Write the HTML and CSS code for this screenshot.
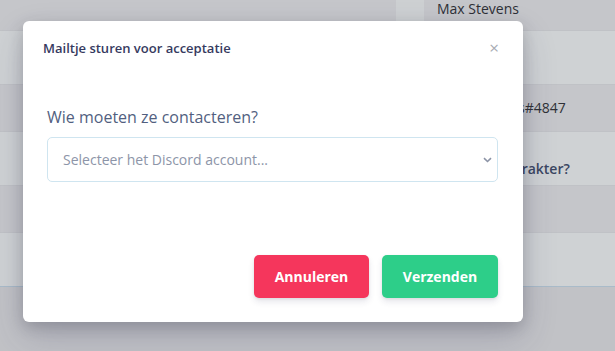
FILE: index.html
```html
<!DOCTYPE html>
<html>
<head>
	<title>Aanvragen</title>
	<link rel="stylesheet" href="styles.css">
</head>
<body>
	<div class="page">
		<div class="row row-dark">
			<div class="cell-gap"></div>
			<div class="cell-strip"></div>
			<div class="cell">Max Stevens</div>
		</div>
		<div class="row row-light"></div>
		<div class="row row-dark"><div class="cell cell-tag">maxstevens#4847</div></div>
		<div class="row row-light"><div class="cell cell-question">Wat is je karakter?</div></div>
		<div class="row row-dark"></div>
		<div class="row row-light row-last"></div>
	</div>

	<div class="modal">
		<div class="modal-header">
			<h6 class="modal-title">Mailtje sturen voor acceptatie</h6>
			<span class="close">&times;</span>
		</div>
		<div class="modal-body">
			<label class="label">Wie moeten ze contacteren?</label>
			<div class="select">
				<span class="placeholder">Selecteer het Discord account...</span>
				<svg class="chevron" width="9" height="6" viewBox="0 0 9 6"><path d="M1 1.2 L4.5 4.5 L8 1.2" fill="none" stroke="#8b93a6" stroke-width="1.6"/></svg>
			</div>
		</div>
		<div class="modal-footer">
			<button class="btn btn-danger">Annuleren</button>
			<button class="btn btn-success">Verzenden</button>
		</div>
	</div>
</body>
</html>
```

FILE: styles.css
```css
body {
	margin: 0;
	padding: 0;
	background-color: #c1c2c6;
	font-family: "Open Sans", "Noto Sans", sans-serif;
	overflow: hidden;
}

.page {
	width: 615px;
	height: 351px;
}

.row {
	display: flex;
	box-sizing: border-box;
	border-bottom: 1px solid #c0c2c6;
}
.row-dark {
	background-color: #c5c6ca;
	height: 47px;
}
.row-light {
	background-color: #cfd2d4;
	height: 54px;
}
.row:first-child {
	height: 31px;
}
.row-last {
	border-bottom: 1px solid #a9bbc9;
}

.cell-gap {
	width: 396px;
}
.cell-strip {
	width: 28px;
	background-color: #cdd0d2;
}
.cell {
	padding-left: 13px;
	font-size: 14px;
	color: #2e3036;
	line-height: 17px;
}
.cell-tag {
	padding-left: 447px;
	padding-top: 14px;
	color: #2f3136;
}
.cell-question {
	padding-left: 445px;
	padding-top: 28px;
	font-weight: 600;
	color: #3b4662;
}

.modal {
	position: absolute;
	left: 23px;
	top: 21px;
	width: 500px;
	height: 301px;
	background-color: #ffffff;
	border-radius: 6px;
	box-shadow: 0 15px 35px rgba(50, 50, 93, 0.2), 0 5px 15px rgba(0, 0, 0, 0.17);
	display: flex;
	flex-direction: column;
}

.modal-header {
	display: flex;
	justify-content: space-between;
	align-items: center;
	padding: 20px 24px 0 20px;
}
.modal-title {
	margin: 0;
	font-size: 13px;
	line-height: 14px;
	font-weight: 600;
	color: #363a60;
}
.close {
	font-size: 17px;
	line-height: 14px;
	color: #a8abb3;
}

.modal-body {
	padding: 50px 25px 0 24px;
}
.label {
	display: block;
	font-size: 16px;
	line-height: 25px;
	color: #525f7f;
	margin-bottom: 7px;
}
.select {
	box-sizing: border-box;
	height: 45px;
	border: 1px solid #cfe5f0;
	border-radius: 5px;
	display: flex;
	align-items: center;
	justify-content: space-between;
	padding: 0 5px 0 15px;
}
.placeholder {
	font-size: 14px;
	color: #8d95a8;
}

.modal-footer {
	display: flex;
	justify-content: flex-end;
	gap: 13px;
	padding: 73px 25px 0 0;
}
.btn {
	height: 43px;
	border: 0 none transparent;
	border-radius: 5px;
	font-family: "Open Sans", "Noto Sans", sans-serif;
	font-size: 14px;
	font-weight: 700;
	color: #ffffff;
	box-shadow: 0 4px 6px rgba(50, 50, 93, 0.11), 0 1px 3px rgba(0, 0, 0, 0.08);
}
.btn-danger {
	width: 115px;
	background-color: #f5365c;
}
.btn-success {
	width: 116px;
	background-color: #2dce89;
}
```
